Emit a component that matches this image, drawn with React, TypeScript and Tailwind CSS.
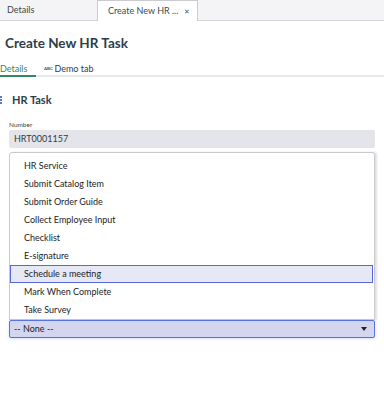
import React from "react";

const items = [
  "HR Service",
  "Submit Catalog Item",
  "Submit Order Guide",
  "Collect Employee Input",
  "Checklist",
  "E-signature",
  "Schedule a meeting",
  "Mark When Complete",
  "Take Survey",
];

export default function App() {
  return (
    <div className="w-[384px] h-[400px] bg-white text-[#293e40] overflow-hidden" style={{ fontFamily: "Lato, 'Open Sans', sans-serif" }}>
      {/* top tab bar */}
      <div className="flex h-[21px] bg-[#f4f4f6] border-b border-[#d5d7da]">
        <div className="w-[97px] flex items-center pl-[7px] text-[9px] text-[#3b4a4d] whitespace-nowrap">Details</div>
        <div className="w-[101px] -mb-px bg-white border-x border-t border-[#c9cbcf] flex items-center pl-[10px] pr-[7px] text-[9px] text-[#3b4a4d] whitespace-nowrap">
          <span className="flex-1">Create New HR ...</span>
          <span className="text-[7px] text-[#555]">✕</span>
        </div>
      </div>
      {/* title */}
      <div className="pl-[5px] pt-[12px] h-[38px] text-[13.5px] font-bold text-[#2e3d49] leading-[20px]">Create New HR Task</div>
      {/* sub tabs */}
      <div className="flex h-[18px] border-b-2 border-[#e8e9eb] text-[9px]">
        <div className="w-[36px] h-[18px] flex items-start pt-[3px] text-[#2f8a5e] border-b-2 border-[#2f8a5e] pl-0">Details</div>
        <div className="ml-[8px] flex items-start pt-[3px] text-[#2e3d49]">
          <span className="text-[4.5px] font-bold mr-[2px] mt-[3.5px] tracking-tighter text-[#555]">ABC</span>
          Demo tab
        </div>
      </div>
      {/* section heading */}
      <div className="flex items-center h-[24px] mt-[11px]">
        <div className="flex flex-col gap-[1px] w-[3px] ml-0">
          <span className="w-[2px] h-[2px] bg-[#5a79c5]" />
          <span className="w-[2px] h-[2px] bg-[#5a79c5]" />
          <span className="w-[2px] h-[2px] bg-[#5a79c5]" />
        </div>
        <span className="ml-[9px] text-[11px] font-bold text-[#2e3d49]">HR Task</span>
      </div>
      <div className="px-[9px] pr-[9px] mt-[8px]">
        <div className="text-[6.5px] text-[#444] leading-[9px]">Number</div>
        <div className="mt-[1px] h-[18px] bg-[#e4e5ea] rounded-[2px] flex items-center pl-[5px] text-[9px] text-[#2e3d49]">HRT0001157</div>
        {/* dropdown list */}
        <div className="mt-[4px] bg-white border border-[#c8cacd] rounded-t-[3px] shadow-[2px_0_2px_rgba(0,0,0,0.12)] pt-[4px] pb-0 pl-[1px] pr-[1px]">
          {items.map((t) =>
            t === "Schedule a meeting" ? (
              <div key={t} className="h-[18px] flex items-center pl-[13px] text-[9px] text-[#1c2226] bg-[#e6e8f6] border border-[#5468e0] -ml-[1px]">{t}</div>
            ) : (
              <div key={t} className="h-[18px] flex items-center pl-[13px] text-[9px] text-[#1c2226]">{t}</div>
            )
          )}
        </div>
        <div className="h-[18px] bg-[#d4d6ef] border border-[#5672e6] rounded-[2px] flex items-center pl-[4px] pr-[7px] text-[9px] text-[#1c2226] shadow-[0_1px_3px_rgba(86,114,230,0.25)]">
          <span className="flex-1">-- None --</span>
          <span className="w-0 h-0 border-l-[3px] border-r-[3px] border-t-[4px] border-l-transparent border-r-transparent border-t-[#222]" />
        </div>
      </div>
    </div>
  );
}
